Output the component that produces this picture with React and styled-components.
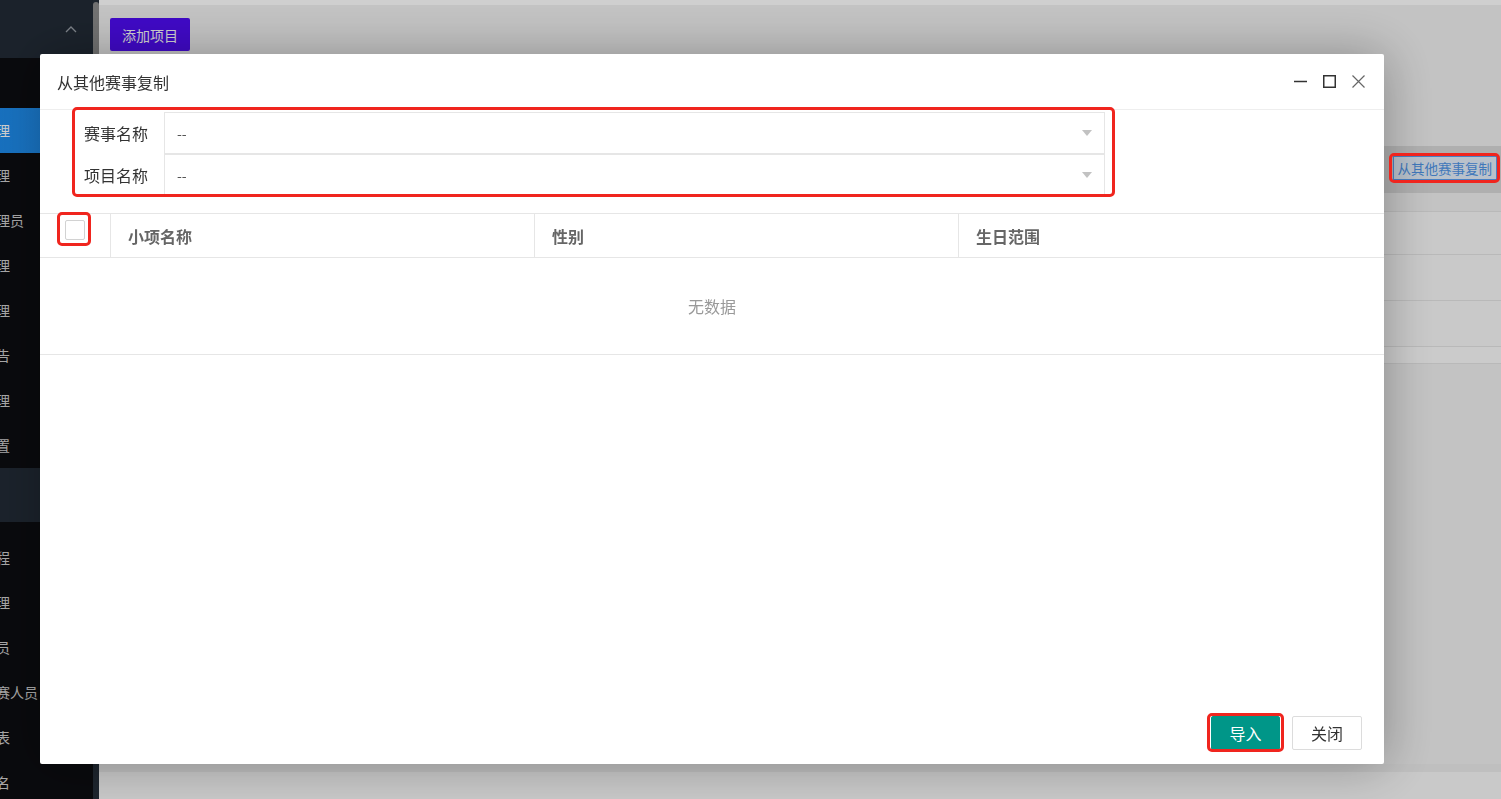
import React from "react";
import styled, { createGlobalStyle } from "styled-components";

const GlobalStyle = createGlobalStyle`
  html, body {
    margin: 0;
    padding: 0;
    height: 100%;
    overflow: hidden;
  }
  body {
    font-family: "Noto Sans CJK SC", "Noto Sans", sans-serif;
    background: #f0f0f0;
  }
  * {
    box-sizing: border-box;
  }
`;

const sideTop = [
  { text: "项目管理", active: true },
  { text: "场地管理" },
  { text: "赛事管理员" },
  { text: "人员管理" },
  { text: "分组管理" },
  { text: "通知公告" },
  { text: "成绩管理" },
  { text: "系统设置" },
];

const sideBottom = ["比赛日程", "编排管理", "技术官员", "所有参赛人员", "成绩总表", "在线报名"];

const columns = ["小项名称", "性别", "生日范围"];

const Page = styled.div`
  display: flex;
  height: 100vh;
  width: 100vw;
`;

const Sidebar = styled.aside`
  display: flex;
  width: 99px;
  flex-shrink: 0;
  background: #0c0d11;
`;

const SideNav = styled.nav`
  width: 93px;
  overflow: hidden;
`;

const SideHeader = styled.div`
  height: 58px;
  background: #222b36;
  display: flex;
  align-items: center;
  justify-content: flex-end;
  padding-right: 16px;
`;

const GroupSpacer = styled.div`
  height: 50px;
`;

const MenuList = styled.ul`
  list-style: none;
  margin: ${(p) => (p.$gap ? "13px" : "0")} 0 0;
  padding: 0;
`;

const MenuItem = styled.li`
  height: 45px;
  line-height: 45px;
  margin-left: -46px;
  width: 139px;
  white-space: nowrap;
  font-size: 14px;
  color: ${(p) => (p.$active ? "#ffffff" : "#cfcfcf")};
  background: ${(p) =>
    p.$active ? "linear-gradient(90deg, #1a86e6, #2396f8)" : "transparent"};
`;

const GroupTitle = styled.div`
  height: 54px;
  background: #222b36;
`;

const ScrollTrack = styled.div`
  width: 6px;
  background: #252e39;
  padding-top: 2px;
`;

const Thumb = styled.div`
  height: 56px;
  border-radius: 3px;
  background: #8c8c8c;
`;

const Main = styled.main`
  flex: 1;
  display: flex;
  flex-direction: column;
  background: #f0f0f0;
`;

const TopStrip = styled.div`
  height: 5px;
  background: #ffffff;
`;

const Content = styled.div`
  flex: 1;
  padding: 13px 0 0 11px;
  display: flex;
  flex-direction: column;
`;

const ButtonBar = styled.div`
  display: flex;
  height: 33px;
`;

const PurpleButton = styled.button`
  height: 33px;
  padding: 0 12px;
  border: none;
  border-radius: 2px;
  background: #4f0cf4;
  color: #ffffff;
  font-family: inherit;
  font-size: 14px;
`;

const ActionRow = styled.div`
  margin-top: 95px;
  height: 47px;
  background: #d8d8d8;
  display: flex;
  align-items: flex-start;
  justify-content: flex-end;
  padding: 10px 4px 0 0;
`;

const CopyButton = styled.button`
  position: relative;
  height: 24px;
  padding: 0 4px;
  border: 1px solid #5a9ef0;
  background: #e4eefa;
  color: #4f94e6;
  font-family: inherit;
  font-size: 13.5px;
  line-height: 22px;
  &::after {
    content: "";
    position: absolute;
    top: -4px;
    left: -5px;
    right: -4px;
    bottom: -4px;
    border: 3px solid #f0251e;
    border-radius: 5px;
    z-index: 20;
  }
`;

const BgTable = styled.div`
  margin-top: 18px;
  background: #f8f8f8;
`;

const BgRow = styled.div`
  height: ${(p) => p.$h}px;
  border-top: 1px solid #e4e4e4;
`;

const Pager = styled.div`
  height: 18px;
  background: #fbfbfb;
  border-top: 1px solid #e4e4e4;
  border-bottom: 1px solid #e4e4e4;
`;

const Footer = styled.footer`
  height: 27px;
  background: #f8f8f8;
  border-top: 8px solid #ececec;
  box-sizing: content-box;
`;

const Mask = styled.div`
  position: fixed;
  inset: 0;
  background: rgba(0, 0, 0, 0.19);
  z-index: 10;
`;

const Dialog = styled.section`
  position: fixed;
  left: 40px;
  top: 54px;
  width: 1344px;
  height: 710px;
  z-index: 11;
  background: #ffffff;
  border-radius: 2px;
  box-shadow: 1px 1px 50px rgba(0, 0, 0, 0.3);
  display: flex;
  flex-direction: column;
`;

const DialogHeader = styled.header`
  height: 56px;
  border-bottom: 1px solid #eeeeee;
  display: flex;
  align-items: center;
  justify-content: space-between;
  padding: 0 19px 0 17px;
`;

const Title = styled.h2`
  margin: 0;
  font-size: 16px;
  font-weight: 400;
  color: #333333;
`;

const WinTools = styled.div`
  display: flex;
  align-items: center;
  gap: 16px;
`;

const WinIcon = styled.svg`
  width: 13px;
  height: 13px;
  display: block;
`;

const DialogBody = styled.div`
  flex: 1;
`;

const Marked = styled.div`
  position: relative;
  &::after {
    content: "";
    position: absolute;
    top: ${(p) => p.$t}px;
    left: ${(p) => p.$l}px;
    right: ${(p) => p.$r}px;
    bottom: ${(p) => p.$b}px;
    border: 3px solid #f0251e;
    border-radius: 5px;
    pointer-events: none;
  }
`;

const Form = styled(Marked)`
  margin: 2px 0 0 33px;
  width: 1032px;
`;

const FormRow = styled.div`
  display: flex;
  height: 42px;
`;

const Label = styled.label`
  width: 91px;
  padding-left: 11px;
  display: flex;
  align-items: center;
  font-size: 16px;
  color: #333333;
`;

const Select = styled.div`
  flex: 1;
  border: 1px solid #e6e6e6;
  display: flex;
  align-items: center;
  justify-content: space-between;
  padding: 0 12px;
  font-size: 14px;
  color: #555555;
`;

const Caret = styled.span`
  width: 0;
  height: 0;
  border-left: 5.5px solid transparent;
  border-right: 5.5px solid transparent;
  border-top: 6px solid #c2c2c2;
`;

const Table = styled.div`
  margin-top: 17px;
  border-top: 1px solid #e6e6e6;
`;

const HeadRow = styled.div`
  display: grid;
  grid-template-columns: 70px 424px 424px 1fr;
  height: 44px;
  border-bottom: 1px solid #e6e6e6;
`;

const HeadCell = styled.div`
  display: flex;
  align-items: ${(p) => (p.$center ? "flex-start" : "center")};
  justify-content: ${(p) => (p.$center ? "center" : "flex-start")};
  padding-left: ${(p) => (p.$center ? "0" : "17px")};
  padding-top: ${(p) => (p.$center ? "6px" : "0")};
  border-left: ${(p) => (p.$first ? "none" : "1px solid #e6e6e6")};
  font-size: 16px;
  font-weight: 700;
  color: #666666;
`;

const CheckMark = styled(Marked)`
  display: flex;
`;

const Checkbox = styled.span`
  width: 20px;
  height: 20px;
  border: 1px solid #d2d2d2;
  border-radius: 2px;
  background: #ffffff;
`;

const Empty = styled.div`
  height: 97px;
  border-bottom: 1px solid #e6e6e6;
  display: flex;
  align-items: center;
  justify-content: center;
  font-size: 16px;
  color: #999999;
`;

const DialogFooter = styled.div`
  display: flex;
  justify-content: flex-end;
  gap: 12px;
  padding: 0 22px 14px;
`;

const ButtonWrap = styled(Marked)`
  display: flex;
`;

const Button = styled.button`
  height: 34px;
  width: ${(p) => (p.$primary ? "69px" : "70px")};
  border: 1px solid ${(p) => (p.$primary ? "#009688" : "#dcdcdc")};
  border-radius: 2px;
  background: ${(p) => (p.$primary ? "#009688" : "#ffffff")};
  color: ${(p) => (p.$primary ? "#ffffff" : "#333333")};
  font-family: inherit;
  font-size: 16px;
  padding: 0;
`;

const App = () => {
  return (
    <>
      <GlobalStyle />
      <Page>
        <Sidebar>
          <SideNav>
            <SideHeader>
              <svg width="12" height="8" viewBox="0 0 12 8">
                <polyline points="1,7 6,2 11,7" fill="none" stroke="#9aa0a8" strokeWidth="1.3" />
              </svg>
            </SideHeader>
            <GroupSpacer />
            <MenuList>
              {sideTop.map((item) => (
                <MenuItem key={item.text} $active={item.active}>
                  {item.text}
                </MenuItem>
              ))}
            </MenuList>
            <GroupTitle />
            <MenuList $gap>
              {sideBottom.map((t) => (
                <MenuItem key={t}>{t}</MenuItem>
              ))}
            </MenuList>
          </SideNav>
          <ScrollTrack>
            <Thumb />
          </ScrollTrack>
        </Sidebar>
        <Main>
          <TopStrip />
          <Content>
            <ButtonBar>
              <PurpleButton>添加项目</PurpleButton>
            </ButtonBar>
            <ActionRow>
              <CopyButton>从其他赛事复制</CopyButton>
            </ActionRow>
            <BgTable>
              <BgRow $h={43} />
              <BgRow $h={46} />
              <BgRow $h={46} />
              <Pager />
            </BgTable>
          </Content>
          <Footer />
        </Main>
      </Page>

      <Mask />

      <Dialog>
        <DialogHeader>
          <Title>从其他赛事复制</Title>
          <WinTools>
            <WinIcon viewBox="0 0 13 13">
              <line x1="0" y1="6.5" x2="13" y2="6.5" stroke="#333" strokeWidth="1.5" />
            </WinIcon>
            <WinIcon viewBox="0 0 13 13">
              <rect x="0.75" y="0.75" width="11.5" height="11.5" fill="none" stroke="#333" strokeWidth="1.5" />
            </WinIcon>
            <WinIcon viewBox="0 0 13 13">
              <path d="M0.5 0.5 L12.5 12.5 M12.5 0.5 L0.5 12.5" fill="none" stroke="#666" strokeWidth="1.2" />
            </WinIcon>
          </WinTools>
        </DialogHeader>

        <DialogBody>
          <Form $t={-5} $l={-1} $r={-10} $b={-1}>
            <FormRow>
              <Label>赛事名称</Label>
              <Select>
                <span>--</span>
                <Caret />
              </Select>
            </FormRow>
            <FormRow>
              <Label>项目名称</Label>
              <Select>
                <span>--</span>
                <Caret />
              </Select>
            </FormRow>
          </Form>

          <Table>
            <HeadRow>
              <HeadCell $first $center>
                <CheckMark $t={-8} $l={-8} $r={-6} $b={-6}>
                  <Checkbox />
                </CheckMark>
              </HeadCell>
              {columns.map((c) => (
                <HeadCell key={c}>{c}</HeadCell>
              ))}
            </HeadRow>
            <Empty>无数据</Empty>
          </Table>
        </DialogBody>

        <DialogFooter>
          <ButtonWrap $t={-3} $l={-4} $r={-4} $b={-2}>
            <Button $primary>导入</Button>
          </ButtonWrap>
          <Button>关闭</Button>
        </DialogFooter>
      </Dialog>
    </>
  );
};

export default App;
